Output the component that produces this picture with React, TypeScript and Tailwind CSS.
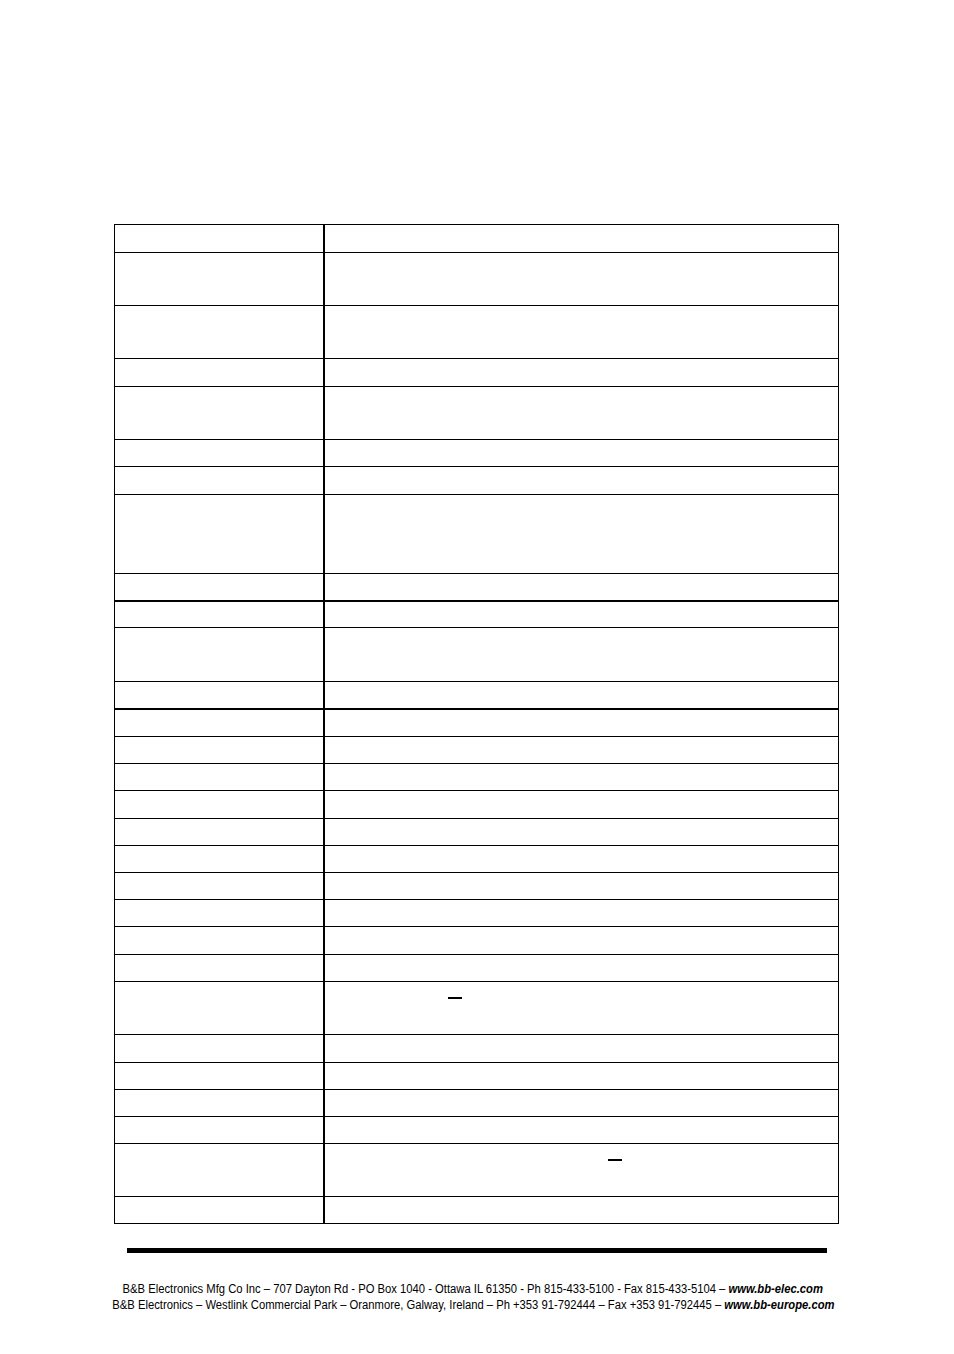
import React from 'react'

// row heights measured from the grid lines (top border included)
const rows: { h: string; thick?: boolean; mark?: string }[] = [
	{ h: 'h-[28px]' },
	{ h: 'h-[53px]' },
	{ h: 'h-[53px]' },
	{ h: 'h-[28px]' },
	{ h: 'h-[53px]' },
	{ h: 'h-[27px]' },
	{ h: 'h-[28px]' },
	{ h: 'h-[79px]' },
	{ h: 'h-[27px]' },
	{ h: 'h-[27px]', thick: true },
	{ h: 'h-[54px]' },
	{ h: 'h-[27px]' },
	{ h: 'h-[28px]', thick: true },
	{ h: 'h-[27px]' },
	{ h: 'h-[27px]' },
	{ h: 'h-[28px]' },
	{ h: 'h-[27px]' },
	{ h: 'h-[27px]' },
	{ h: 'h-[27px]' },
	{ h: 'h-[27px]' },
	{ h: 'h-[28px]' },
	{ h: 'h-[27px]' },
	{ h: 'h-[53px]', mark: 'ml-[123px]' },
	{ h: 'h-[28px]' },
	{ h: 'h-[27px]' },
	{ h: 'h-[27px]' },
	{ h: 'h-[27px]' },
	{ h: 'h-[53px]', mark: 'ml-[283px]' },
	{ h: 'h-[27px]' },
]

const App = () => {
	return (
		<div className="w-[954px] h-[1354px] bg-white flex flex-col font-['Liberation_Sans',Arial,sans-serif] text-black">
			<div className="ml-[114px] mt-[224px] w-[725px] flex flex-col border-l border-r border-b border-black">
				{rows.map((r, i) => (
					<div
						key={i}
						className={`${r.h} flex ${r.thick ? 'border-t-2' : 'border-t'} border-black`}>
						<div className="w-[210px] border-r-2 border-black" />
						<div className="flex-1">
							{r.mark && <div className={`${r.mark} mt-[15px] w-[14px] h-[2px] bg-black`} />}
						</div>
					</div>
				))}
			</div>

			{/*......................................
               *footer
            ......................................*/}
			<div className="ml-[127px] mt-[24px] w-[700px] h-[5px] bg-black" />
			<div className="ml-[73px] w-[800px] mt-[28px] flex flex-col items-center text-[12px] leading-[16px]">
				<p className="whitespace-nowrap scale-x-[0.937]">
					B&amp;B Electronics Mfg Co Inc – 707 Dayton Rd - PO Box 1040 - Ottawa IL 61350 - Ph 815-433-5100 - Fax
					815-433-5104 – <span className="font-bold italic">www.bb-elec.com</span>
				</p>
				<p className="whitespace-nowrap scale-x-[0.937]">
					B&amp;B Electronics – Westlink Commercial Park – Oranmore, Galway, Ireland – Ph +353 91-792444 – Fax +353
					91-792445 – <span className="font-bold italic">www.bb-europe.com</span>
				</p>
			</div>
		</div>
	)
}

export default App
